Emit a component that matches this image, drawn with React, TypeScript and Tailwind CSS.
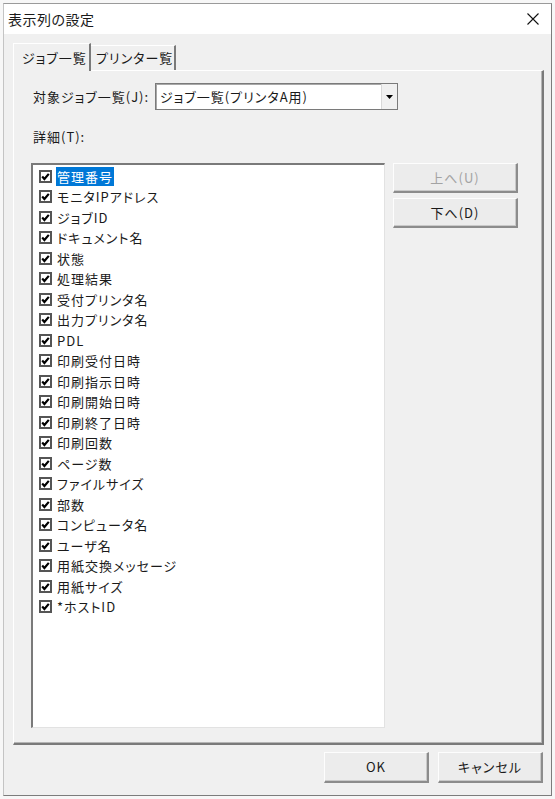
import React from "react";

const columns = [
  "管理番号",
  "モニタIPアドレス",
  "ジョブID",
  "ドキュメント名",
  "状態",
  "処理結果",
  "受付プリンタ名",
  "出力プリンタ名",
  "PDL",
  "印刷受付日時",
  "印刷指示日時",
  "印刷開始日時",
  "印刷終了日時",
  "印刷回数",
  "ページ数",
  "ファイルサイズ",
  "部数",
  "コンピュータ名",
  "ユーザ名",
  "用紙交換メッセージ",
  "用紙サイズ",
  "*ホストID",
];

const CheckBox: React.FC = () => (
  <svg width="13" height="13" viewBox="0 0 13 13" className="shrink-0">
    <rect x="1" y="1" width="11" height="11" fill="white" stroke="#555" strokeWidth="2" />
    <path d="M3.2 6.6 L5.4 9 L9.8 3.9" fill="none" stroke="#000" strokeWidth="2.2" />
  </svg>
);

const DialogButton: React.FC<{ label: string; disabled?: boolean; className?: string }> = ({
  label,
  disabled,
  className = "",
}) => (
  <button
    className={`flex items-center justify-center bg-[#ececec] border-t border-l border-t-[#fdfdfd] border-l-[#fdfdfd] border-r-2 border-b-2 border-r-[#8c8c8c] border-b-[#8c8c8c] shadow-[inset_-1px_-1px_0_#c9c9c9] ${
      disabled ? "text-[#a3a3a3]" : "text-[#1a1a1a]"
    } ${className}`}
  >
    {label}
  </button>
);

const App: React.FC = () => {
  return (
    <div className="w-[555px] h-[799px] bg-[#f7f7f7] p-[3px] font-['Noto_Sans_CJK_JP','Noto_Sans',sans-serif] text-[13px] tracking-[1px] [font-feature-settings:'palt'] text-[#1a1a1a]">
      <div className="h-full flex flex-col border border-t-[#9a9a9a] border-l-[#c4c4c4] border-r-[#7c7c7c] border-b-[#7c7c7c] bg-[#f0f0f0]">
        {/* title bar */}
        <div className="h-[30px] bg-white flex items-center justify-between pl-[4px] pr-[12px]">
          <span className="text-[14px] tracking-[0.5px]">表示列の設定</span>
          <svg width="12" height="12" viewBox="0 0 12 12">
            <path d="M0.5 0.5 L11.5 11.5 M11.5 0.5 L0.5 11.5" stroke="#111" strokeWidth="1.1" />
          </svg>
        </div>

        <div className="flex-1 flex flex-col pl-[9px] pr-[7px] pt-[9px]">
          {/* tabs */}
          <div className="h-[27px] flex items-end">
            <div className="relative z-10 -mb-px h-[28px] w-[78px] flex items-center pl-[8px] bg-[#f0f0f0] border-t border-l border-t-white border-l-white border-r-2 border-r-[#7a7a7a]">
              ジョブ一覧
            </div>
            <div className="h-[25px] w-[85px] flex items-center pl-[5px] border-t border-t-white border-r-2 border-r-[#7a7a7a]">
              プリンター覧
            </div>
          </div>

          {/* tab panel */}
          <div className="h-[675px] flex flex-col pl-[17px] pt-[12px] border-t border-l border-t-white border-l-white border-r-2 border-b-2 border-r-[#7a7a7a] border-b-[#7a7a7a] shadow-[inset_-1px_-1px_0_#b5b5b5]">
            <div className="flex items-center h-[27px]">
              <span className="w-[124px] pl-[2px]">対象ジョブ一覧(J):</span>
              <div className="w-[243px] h-[27px] flex bg-white border border-[#7a7a7a] shadow-[inset_1px_1px_0_#a8a8a8]">
                <span className="flex-1 flex items-center pl-[4px]">ジョブ一覧(プリンタA用)</span>
                <div className="w-[16px] flex items-center justify-center bg-[#f0f0f0] border-l border-l-[#d8d8d8]">
                  <svg width="7" height="4" viewBox="0 0 7 4">
                    <path d="M0 0 L7 0 L3.5 4 Z" fill="#000" />
                  </svg>
                </div>
              </div>
            </div>

            <div className="mt-[19px] h-[16px] leading-[16px] pl-[2px]">詳細(T):</div>

            <div className="mt-[18px] flex items-start gap-[8px]">
              <div className="w-[354px] h-[565px] bg-white border-t-2 border-l-2 border-t-[#7a7a7a] border-l-[#7a7a7a] border-r border-b border-r-[#e2e2e2] border-b-[#e2e2e2] pl-[6px] pt-[1px]">
                {columns.map((name, i) => (
                  <div key={name} className="h-[20.5px] flex items-center gap-[4px]">
                    <CheckBox />
                    <span
                      className={`h-[19px] flex items-center px-[1px] ${
                        i === 0 ? "bg-[#0078d7] text-white" : ""
                      }`}
                    >
                      {name}
                    </span>
                  </div>
                ))}
              </div>

              <div className="flex flex-col gap-[5px]">
                <DialogButton label="上へ(U)" disabled className="w-[125px] h-[30px]" />
                <DialogButton label="下へ(D)" className="w-[125px] h-[30px]" />
              </div>
            </div>
          </div>

          {/* footer */}
          <div className="mt-[7px] flex justify-end gap-[9px] pr-[1px]">
            <DialogButton label="OK" className="w-[105px] h-[31px]" />
            <DialogButton label="キャンセル" className="w-[105px] h-[31px]" />
          </div>
        </div>
      </div>
    </div>
  );
};

export default App;
